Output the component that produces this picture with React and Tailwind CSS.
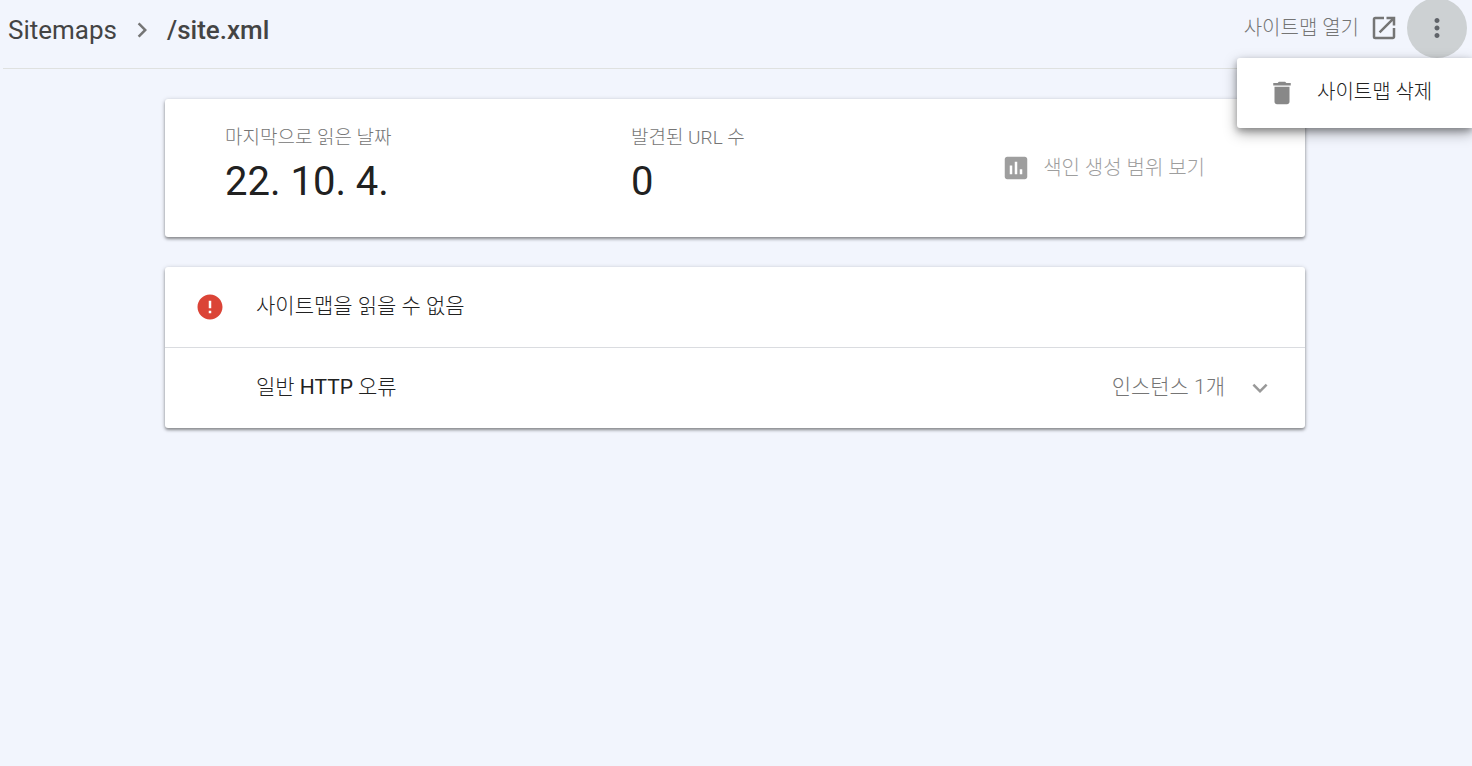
import React, { useState } from 'react'
import {
  MdAssessment,
  MdChevronRight,
  MdDelete,
  MdError,
  MdExpandMore,
  MdMoreVert,
  MdOpenInNew,
} from 'react-icons/md'

const cardClassName =
  'rounded-[3px] bg-white shadow-[0_1px_5px_rgba(0,0,0,0.2),0_2px_3px_rgba(0,0,0,0.35)]'

const Stat = ({ label, value }) => (
  <div>
    <dt className="text-[19px] leading-[26px] text-[#757575]">{label}</dt>
    <dd className="mt-1 text-[40px] font-normal leading-[54px] text-[#212121]">{value}</dd>
  </div>
)

const PageHeader = () => {
  const [menuOpen, setMenuOpen] = useState(true)

  return (
    <header className="relative ml-[3px] flex h-[69px] items-start justify-between border-b border-[#dfe1e0]">
      <nav aria-label="Breadcrumb" className="flex h-[60px] items-center pl-[5px] text-[26px] text-[#444444]">
        <a href="#sitemaps" className="font-normal">Sitemaps</a>
        <MdChevronRight size={30} className="mx-[10px] text-[#757575]" />
        <h1 className="font-medium">/site.xml</h1>
      </nav>

      <div className="flex h-[56px] items-center pr-[5px] text-[#757575]">
        <a href="#open" className="mr-2 flex items-center gap-[10px] text-[20px] leading-[28px]">
          사이트맵 열기
          <MdOpenInNew size={30} />
        </a>
        <button
          type="button"
          aria-label="더보기"
          aria-expanded={menuOpen}
          onClick={() => setMenuOpen(!menuOpen)}
          className="flex h-[60px] w-[60px] items-center justify-center rounded-full bg-[#cdd1d3] text-[#5f6368]"
        >
          <MdMoreVert size={30} />
        </button>
      </div>

      {menuOpen && (
        <div
          role="menu"
          className="absolute right-0 top-[58px] w-[235px] rounded-l-[3px] bg-white py-[10px] shadow-[0_5px_14px_rgba(0,0,0,0.35),0_3px_6px_rgba(0,0,0,0.25)]"
        >
          <button
            type="button"
            role="menuitem"
            className="flex h-[50px] w-full items-center gap-5 pl-[30px] text-[20px] text-[#212121]"
          >
            <MdDelete size={30} className="text-[#888888]" />
            <span className="pb-0.5">사이트맵 삭제</span>
          </button>
        </div>
      )}
    </header>
  )
}

const App = () => (
  <div className="min-h-screen bg-[#f2f5fd] font-['Roboto','Noto_Sans_CJK_KR',sans-serif] font-light">
    <PageHeader />

    <main className="pr-0.5 pt-[30px]">
      <div className="mx-auto flex max-w-[1140px] flex-col gap-[30px]">
        <section className={`${cardClassName} flex h-[138px] items-start justify-between pl-[60px] pr-[100px] pt-[26px]`}>
          <dl className="grid grid-cols-[406px_auto]">
            <Stat label="마지막으로 읽은 날짜" value="22. 10. 4." />
            <Stat label="발견된 URL 수" value="0" />
          </dl>
          <button
            type="button"
            disabled
            className="flex items-center gap-3 self-center whitespace-nowrap pb-[26px] text-[20px] text-[#9e9e9e]"
          >
            <MdAssessment size={30} />
            색인 생성 범위 보기
          </button>
        </section>

        <section className={cardClassName}>
          <div className="flex h-[81px] items-center gap-[31px] border-b border-[#dadce0] pl-[30px]">
            <MdError size={30} className="text-[#db4437]" />
            <h2 className="text-[21px] text-[#212121]">사이트맵을 읽을 수 없음</h2>
          </div>
          <button
            type="button"
            className="flex h-[80px] w-full items-center justify-between pl-[91px] pr-[30px] text-[21px] text-[#212121]"
          >
            <span>일반 <span className="font-normal">HTTP</span> 오류</span>
            <span className="flex items-center gap-5 text-[#757575]">
              인스턴스 1개
              <MdExpandMore size={30} className="text-[#999999]" />
            </span>
          </button>
        </section>
      </div>
    </main>
  </div>
)

export default App
